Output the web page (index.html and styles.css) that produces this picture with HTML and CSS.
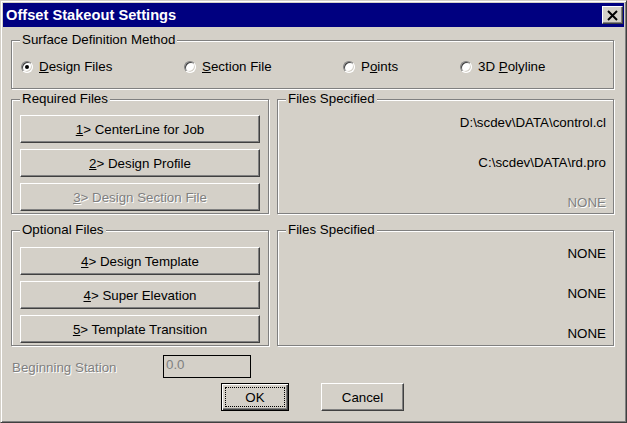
FILE: index.html
```html
<!DOCTYPE html>
<html lang="en">
<head>
  <meta charset="UTF-8" />
  <title>Offset Stakeout Settings</title>
  <link rel="stylesheet" href="styles.css">
</head>
<body>
  <div class="window">
    <div class="titlebar">
      <span class="title">Offset Stakeout Settings</span>
      <button class="close-btn">
        <svg width="11" height="11" viewBox="0 0 11 11">
          <path d="M1 1 L10 10 M10 1 L1 10" stroke="#000" stroke-width="2" />
        </svg>
      </button>
    </div>

    <div class="content">
      <div class="group surface">
        <span class="group-label">Surface Definition Method</span>
        <div class="radio-row">
          <label class="radio-option"><span class="radio checked"></span><span><u>D</u>esign Files</span></label>
          <label class="radio-option"><span class="radio"></span><span><u>S</u>ection File</span></label>
          <label class="radio-option"><span class="radio"></span><span>P<u>o</u>ints</span></label>
          <label class="radio-option"><span class="radio"></span><span>3D <u>P</u>olyline</span></label>
        </div>
      </div>

      <div class="files-row">
        <div class="group buttons-group">
          <span class="group-label">Required Files</span>
          <button class="btn"><u>1</u>&gt; CenterLine for Job</button>
          <button class="btn"><u>2</u>&gt; Design Profile</button>
          <button class="btn disabled"><u>3</u>&gt; Design Section File</button>
        </div>
        <div class="group specified">
          <span class="group-label">Files Specified</span>
          <div class="file-list">
            <div>D:\scdev\DATA\control.cl</div>
            <div>C:\scdev\DATA\rd.pro</div>
            <div class="muted">NONE</div>
          </div>
        </div>
      </div>

      <div class="files-row second">
        <div class="group buttons-group">
          <span class="group-label">Optional Files</span>
          <button class="btn"><u>4</u>&gt; Design Template</button>
          <button class="btn"><u>4</u>&gt; Super Elevation</button>
          <button class="btn"><u>5</u>&gt; Template Transition</button>
        </div>
        <div class="group specified">
          <span class="group-label">Files Specified</span>
          <div class="file-list">
            <div>NONE</div>
            <div>NONE</div>
            <div>NONE</div>
          </div>
        </div>
      </div>

      <div class="station-row">
        <span class="station-label muted">Beginning Station</span>
        <div class="station-input">0.0</div>
      </div>

      <div class="actions">
        <button class="btn ok">OK</button>
        <button class="btn cancel">Cancel</button>
      </div>
    </div>
  </div>
</body>
</html>
```

FILE: styles.css
```css
* {
  box-sizing: border-box;
}

body {
  margin: 0;
  font-family: "Liberation Sans", Arial, sans-serif;
  font-size: 13.33px;
  background-color: #d4d0c8;
  color: #000;
}

.window {
  width: 627px;
  height: 423px;
  border: 1px solid;
  border-color: #d4d0c8 #404040 #404040 #d4d0c8;
  box-shadow: inset 1px 1px #fff, inset -1px -1px #808080;
  padding: 2px;
  display: flex;
  flex-direction: column;
}

.titlebar {
  height: 24px;
  background-color: #000080;
  display: flex;
  align-items: center;
  justify-content: space-between;
  padding: 0 1px 0 3px;
}

.title {
  color: #fff;
  font-weight: bold;
  font-size: 14.67px;
}

.close-btn {
  width: 21px;
  height: 18px;
  padding: 0;
  background-color: #d4d0c8;
  border: 1px solid;
  border-color: #fff #404040 #404040 #fff;
  box-shadow: inset -1px -1px #808080;
  display: flex;
  align-items: center;
  justify-content: center;
}

.content {
  flex: 1;
  padding: 13px 10px 0 8px;
  display: flex;
  flex-direction: column;
}

.group {
  position: relative;
  border: 1px solid #808080;
  box-shadow: inset 1px 1px #fff, 1px 1px #fff;
}

.group-label {
  position: absolute;
  top: -9px;
  left: 8px;
  padding: 0 2px;
  line-height: 16px;
  background-color: #d4d0c8;
}

.surface {
  height: 49px;
  padding: 18px 0 0 9px;
}

.radio-row {
  display: grid;
  grid-template-columns: 163px 159px 117px auto;
  line-height: 16px;
}

.radio-option {
  display: flex;
  align-items: center;
  gap: 6px;
}

.radio {
  position: relative;
  flex: none;
  width: 12px;
  height: 12px;
  border-radius: 50%;
  background-color: #fff;
  border: 1px solid;
  border-color: #808080 #fff #fff #808080;
  box-shadow: inset 1px 1px #404040, inset -1px -1px #d4d0c8;
}

.radio.checked::after {
  content: "";
  position: absolute;
  left: 3px;
  top: 3px;
  width: 4px;
  height: 4px;
  border-radius: 50%;
  background-color: #000;
}

.files-row {
  display: flex;
  gap: 8px;
  margin-top: 10px;
}

.files-row.second {
  margin-top: 16px;
}

.buttons-group {
  width: 258px;
  height: 115px;
  padding: 15px 8px 0;
  display: flex;
  flex-direction: column;
  gap: 6px;
}

.files-row.second .buttons-group {
  height: 116px;
  padding-top: 16px;
}

.specified {
  flex: 1;
}

.file-list {
  padding: 15px 7px 0 0;
  display: flex;
  flex-direction: column;
  gap: 24px;
  text-align: right;
  line-height: 16px;
}

.muted {
  color: #808080;
  text-shadow: 1px 1px #fff;
}

.btn {
  height: 28px;
  padding: 0;
  font: inherit;
  color: #000;
  background-color: #d4d0c8;
  border: 1px solid;
  border-color: #fff #404040 #404040 #fff;
  box-shadow: inset -1px -1px #808080;
}

.btn.disabled {
  color: #808080;
  text-shadow: 1px 1px #fff;
}

.station-row {
  display: flex;
  align-items: center;
  height: 23px;
  margin-top: 9px;
}

.station-label {
  width: 152px;
  padding: 2px 0 0 1px;
}

.station-input {
  width: 88px;
  height: 23px;
  border: 1px solid #000;
  padding: 1px 2px;
  line-height: 16px;
  color: #808080;
}

.actions {
  display: flex;
  justify-content: center;
  gap: 32px;
  margin-top: 5px;
}

.btn.ok {
  width: 68px;
  border-color: #000;
  box-shadow: inset 1px 1px #fff, inset -1px -1px #404040, inset -2px -2px #808080;
  outline: 1px dotted #000;
  outline-offset: -5px;
}

.btn.cancel {
  width: 83px;
}
```
